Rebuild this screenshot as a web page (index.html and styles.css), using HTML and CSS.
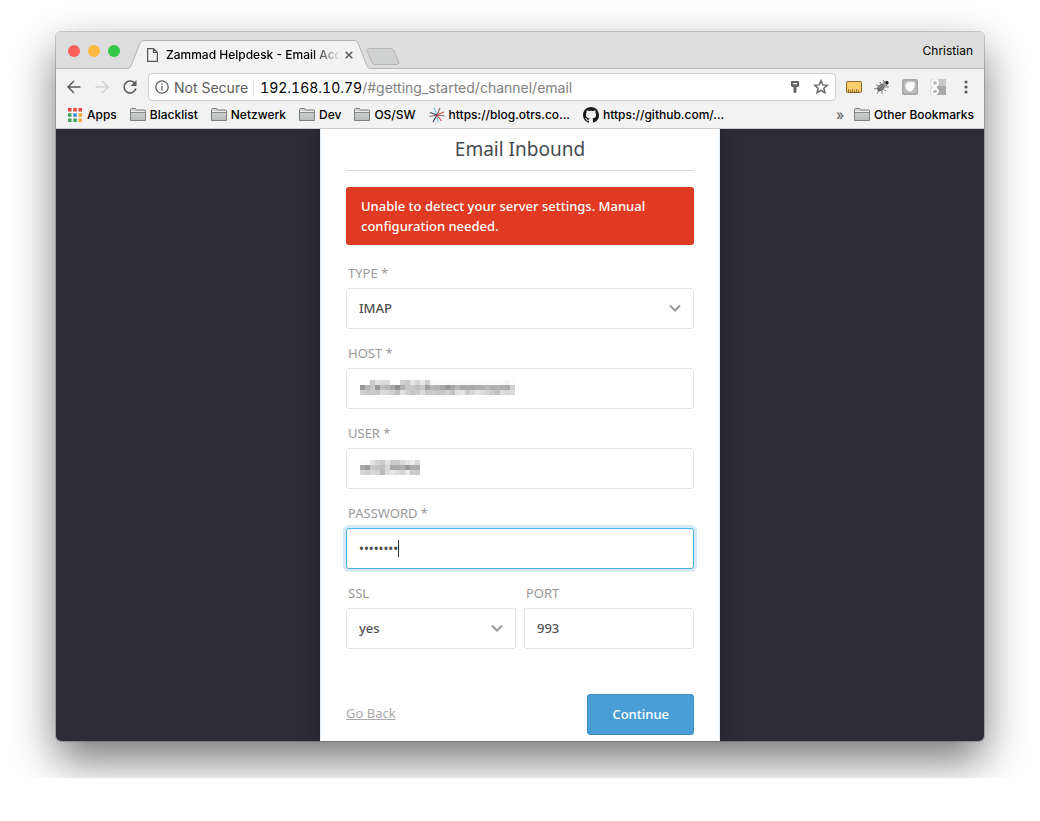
FILE: index.html
```
<!DOCTYPE html>
<html lang="en">
<head>
  <meta charset="UTF-8">
  <title>Zammad Helpdesk - Email Account</title>
  <link rel="stylesheet" href="styles.css">
</head>
<body>
  <svg class="sprite" width="0" height="0">
    <defs>
      <linearGradient id="folderFill" x1="0" y1="0" x2="0" y2="1">
        <stop offset="0" stop-color="#d6d8d8"/>
        <stop offset="1" stop-color="#b9bcbc"/>
      </linearGradient>
    </defs>
    <symbol id="folder" viewBox="0 0 16 13">
      <path d="M.5 12.5V1.500q0-1 1-1h4l1 1.500h8q1 0 1 1v9.500z" fill="url(#folderFill)" stroke="#7d7f7f"/>
      <path d="M1 4.500h14" stroke="#8b8d8d"/>
      <path d="M1 3.500h14" stroke="#eee"/>
    </symbol>
    <symbol id="chevron" viewBox="0 0 12 8">
      <path d="M1 1.500l5 5 5-5" fill="none" stroke="#999" stroke-width="2"/>
    </symbol>
  </svg>

  <div class="stage">
    <div class="window">
      <header class="tabstrip">
        <div class="lights">
          <button class="light red" aria-label="Close"></button>
          <button class="light yellow" aria-label="Minimize"></button>
          <button class="light green" aria-label="Zoom"></button>
        </div>
        <div class="tab">
          <svg class="tab-shape" viewBox="0 0 242 29">
            <path d="M0 28.500Q2 28 3 26L12 3Q13 .5 16 .5H226Q229 .5 230 3L239 26Q240 28 242 28.500V29H0z" fill="#f2f2f2"/>
            <path d="M0 28.500Q2 28 3 26L12 3Q13 .5 16 .5H226Q229 .5 230 3L239 26Q240 28 242 28.500" fill="none" stroke="#b4b4b4"/>
          </svg>
          <svg class="page-icon" width="11" height="14" viewBox="0 0 11 14" fill="none" stroke="#555" stroke-width="1.200">
            <path d="M.6.6H6.500L10.400 4.500V13.400H.6zM6.500.6V4.500H10.400"/>
          </svg>
          <span class="tab-title">Zammad Helpdesk - Email Acc</span>
          <button class="tab-close" aria-label="Close tab">
            <svg width="8" height="8" viewBox="0 0 8 8" stroke="#555" stroke-width="1.400"><path d="M.7.7l6.600 6.600M7.300.7L.7 7.300"/></svg>
          </button>
        </div>
        <button class="new-tab" aria-label="New tab">
          <svg width="34" height="17" viewBox="0 0 34 17"><path d="M3 .5H24Q27 .5 28 3L32.500 14Q33 16.500 31 16.500H9Q7 16.500 6 14L1 2.500Q.5.5 3 .5z" fill="#d0d1d1" stroke="#b4b4b4"/></svg>
        </button>
        <span class="profile">Christian</span>
      </header>

      <nav class="toolbar">
        <button aria-label="Back">
          <svg width="16" height="16" viewBox="0 0 16 16" fill="none" stroke="#5c5c5c" stroke-width="1.500"><path d="M14.500 8H2.500M8 2L2 8l6 6"/></svg>
        </button>
        <button aria-label="Forward">
          <svg width="16" height="16" viewBox="0 0 16 16" fill="none" stroke="#d2d2d2" stroke-width="1.500"><path d="M1.500 8h12M8 2l6 6-6 6"/></svg>
        </button>
        <button aria-label="Reload">
          <svg width="16" height="16" viewBox="0 0 16 16" fill="none" stroke="#5c5c5c" stroke-width="1.600"><path d="M13 4.500A6 6 0 1 0 13.900 9.500"/><path d="M14.500 1v6h-6z" fill="#5c5c5c" stroke="none"/></svg>
        </button>
        <div class="omnibox">
          <svg width="14" height="14" viewBox="0 0 14 14" fill="none" stroke="#5c5c5c" stroke-width="1.300"><circle cx="7" cy="7" r="6.200"/><path d="M7 6v4.500M7 3.300v1.500"/></svg>
          <span class="security">Not Secure</span>
          <span class="url" role="textbox" aria-label="Address"><b>192.168.10.79</b>/#getting_started/channel/email</span>
          <button aria-label="Saved password">
            <svg width="10" height="14" viewBox="0 0 10 14" fill="#666"><path d="M1.500 1h7Q9 1 9 1.500V6L8 7H6.500V12L5.500 13H4L3.500 12V7H2L1 6V1.500Q1 1 1.500 1z"/><path d="M3 3h4v1.200H3z" fill="#fff"/></svg>
          </button>
          <button aria-label="Bookmark this page">
            <svg width="16" height="16" viewBox="0 0 16 16" fill="none" stroke="#666" stroke-width="1.500"><path d="M8 1.800l1.800 4.100 4.500.4-3.400 3 1 4.300L8 11.300l-3.900 2.300 1-4.300-3.400-3 4.500-.4z"/></svg>
          </button>
        </div>
        <button aria-label="Page ruler">
          <svg width="16" height="16" viewBox="0 0 16 16"><rect x=".5" y="2.500" width="15" height="11" rx="1" fill="#f9cf6c" stroke="#8b6528"/><path d="M2.500 13V10M4.500 13v-2M6.500 13V10M8.500 13v-2M10.500 13V10M12.500 13v-2" stroke="#8b6528" stroke-width=".9"/></svg>
        </button>
        <button aria-label="Bug tracker">
          <svg width="16" height="16" viewBox="0 0 16 16"><g stroke="#777" stroke-width=".9" fill="none"><path d="M2 6l3 1M0 10l4-1M3 15l2-4M6 3l2 4M15 8l-4 0M12 12l-3-2M8 15l0-4M9 1l2 3"/></g><ellipse cx="7" cy="8.500" rx="4.600" ry="2.700" transform="rotate(-45 7 8.500)" fill="#666"/><circle cx="11.500" cy="4.500" r="2.800" fill="#999"/><circle cx="13" cy="3.500" r="1.500" fill="#111"/><path d="M5 9l3-3M6.500 10.500l3-3" stroke="#aaa"/></svg>
        </button>
        <button aria-label="Extension">
          <svg width="16" height="16" viewBox="0 0 16 16"><rect width="16" height="16" rx="2.500" fill="#a4a4a4"/><rect x="1.500" y="1.500" width="13" height="13" rx="2" fill="#bcbcbc"/><path d="M3.500 6.500Q3.500 3 7 3q6-1 5.800 2Q12.500 10 9.500 12.500 3.500 13 3.500 6.500z" fill="#fafafa"/></svg>
        </button>
        <button aria-label="Google extension">
          <svg width="16" height="16" viewBox="0 0 16 16"><path d="M0 0h9v16H0z" fill="#e2e2e2"/><path d="M8 0h8v7H8z" fill="#c8c8c8"/><path d="M7 7h9v9H7z" fill="#aaa"/><g fill="#b8b8b8" stroke="#fff" stroke-width="1.800"><ellipse cx="5" cy="4" rx="2.700" ry="2.900"/><path d="M5 7.500q-1 1.500 1 2.300 2.500 1.200 1.800 3.200Q7 15 4.500 15T2 12.500 5 10"/></g></svg>
        </button>
        <button aria-label="Menu">
          <svg width="16" height="16" viewBox="0 0 16 16" fill="#5c5c5c"><circle cx="8" cy="3" r="1.600"/><circle cx="8" cy="8" r="1.600"/><circle cx="8" cy="13" r="1.600"/></svg>
        </button>
      </nav>

      <nav class="bookmarks">
        <a href="#">
          <svg width="16" height="16" viewBox="0 0 16 16">
            <path d="M1 1h3.500v3.500H1zM6.300 1h3.500v3.500H6.300zM11.500 1H15v3.500h-3.500z" fill="#e0463b"/>
            <path d="M1 6.300h3.500v3.500H1zM1 11.500h3.500V15H1zM6.300 11.500h3.500V15H6.300z" fill="#3fa45b"/>
            <path d="M6.300 6.300h3.500v3.500H6.300z" fill="#3b8be8"/>
            <path d="M11.500 6.300H15v3.500h-3.500zM11.500 11.500H15V15h-3.500z" fill="#efab3a"/>
          </svg>
          Apps
        </a>
        <a href="#"><svg width="16" height="13"><use href="#folder"/></svg>Blacklist</a>
        <a href="#"><svg width="16" height="13"><use href="#folder"/></svg>Netzwerk</a>
        <a href="#"><svg width="16" height="13"><use href="#folder"/></svg>Dev</a>
        <a href="#"><svg width="16" height="13"><use href="#folder"/></svg>OS/SW</a>
        <a href="#">
          <svg width="16" height="16" viewBox="0 0 16 16" fill="none" stroke-width="1.200">
            <path d="M8 8L5 .8M8 8L9 15.500" stroke="#7fc0e6"/>
            <path d="M8 8L11 1M8 8L.5 9.500" stroke="#8a6a66"/>
            <path d="M8 8L4 15M8 8L1 5.500" stroke="#3d4a58"/>
            <path d="M8 8l7.500 1" stroke="#6a7380"/>
            <path d="M8 8l4.500 6M8 8L15 5" stroke="#df4a43"/>
          </svg>
          https://blog.otrs.co...
        </a>
        <a href="#">
          <svg width="16" height="16" viewBox="0 0 16 16" fill="#191717"><path d="M8 0C3.580 0 0 3.580 0 8c0 3.540 2.290 6.530 5.470 7.590.4.070.55-.17.55-.38 0-.19-.01-.82-.01-1.490-2.010.37-2.530-.49-2.690-.94-.09-.23-.48-.94-.82-1.130-.28-.15-.68-.52-.01-.53.63-.01 1.080.58 1.230.82.72 1.210 1.870.87 2.330.66.07-.52.28-.87.51-1.070-1.780-.2-3.640-.89-3.640-3.950 0-.87.31-1.590.82-2.150-.08-.2-.36-1.020.08-2.120 0 0 .67-.21 2.200.82.64-.18 1.320-.27 2-.27s1.360.09 2 .27c1.530-1.040 2.200-.82 2.200-.82.44 1.100.16 1.920.08 2.120.51.56.82 1.270.82 2.150 0 3.070-1.870 3.750-3.650 3.950.29.25.54.73.54 1.480 0 1.070-.01 1.930-.01 2.200 0 .21.15.46.55.38A8 8 0 0 0 16 8c0-4.420-3.580-8-8-8z"/></svg>
          https://github.com/...
        </a>
        <button class="more" aria-label="More bookmarks">»</button>
        <a href="#"><svg width="16" height="13"><use href="#folder"/></svg>Other Bookmarks</a>
      </nav>

      <main class="viewport">
        <form class="card">
          <h2>Email Inbound</h2>
          <div class="alert" role="alert">Unable to detect your server settings. Manual configuration needed.</div>

          <div class="form-group">
            <label for="type">TYPE *</label>
            <div class="control">
              <select id="type"><option>IMAP</option><option>POP3</option></select>
              <svg class="arrow" width="12" height="8"><use href="#chevron"/></svg>
            </div>
          </div>

          <div class="form-group">
            <label for="host">HOST *</label>
            <div class="control">
              <input id="host" type="text">
              <svg class="mosaic" id="hostMosaic"></svg>
            </div>
          </div>

          <div class="form-group">
            <label for="user">USER *</label>
            <div class="control">
              <input id="user" type="text">
              <svg class="mosaic" id="userMosaic"></svg>
            </div>
          </div>

          <div class="form-group">
            <label for="password">PASSWORD *</label>
            <div class="control">
              <input id="password" class="is-focused" type="password" value="password">
              <span class="caret"></span>
            </div>
          </div>

          <div class="form-row">
            <div class="form-group">
              <label for="ssl">SSL</label>
              <div class="control">
                <select id="ssl"><option>yes</option><option>no</option></select>
                <svg class="arrow" width="12" height="8"><use href="#chevron"/></svg>
              </div>
            </div>
            <div class="form-group">
              <label for="port">PORT</label>
              <div class="control">
                <input id="port" type="text" value="993">
              </div>
            </div>
          </div>

          <div class="form-controls">
            <a class="go-back" href="#">Go Back</a>
            <button class="btn" type="submit">Continue</button>
          </div>
        </form>
      </main>
    </div>
  </div>

  <script src="script.js"></script>
</body>
</html>
```
FILE: script.js
```
// Redacted values: one row of grey levels (hex pairs) per line of 5px cells
const mosaics = {
  hostMosaic: [
    'fefec8e2 dcdcfefe d0c8e2d6 e8d0fafc fafcfafc fafcfafc fcfafcfc faf4fc',
    '98b4c898 c0b8a890 b0c8c8c0 c8a0b8b4 a898a8b8 a8aca8b0 b0b8b0b8 b0a8d0',
    'd0c8ccc8 dcd8d0c0 e0d0c8cc dcc8ccc8 c8d0c4e0 e4ccd8e4 dcd4ccc0 dcd8dc'
  ],
  userMosaic: [
    'fcfce4d4 c8e2cccc d8e4ecd8',
    'ac9cc8c4 c0d8a8a8 b098acac',
    'd8d0d8d4 b8dce6dc d4e8ccc8'
  ]
};

for (const [id, rows] of Object.entries(mosaics)) {
  const svg = document.getElementById(id);
  rows.forEach((row, y) => {
    row.replace(/ /g, '').match(/../g).forEach((v, x) => {
      const rect = document.createElementNS('http://www.w3.org/2000/svg', 'rect');
      rect.setAttribute('x', x * 5);
      rect.setAttribute('y', y * 5);
      rect.setAttribute('width', 5);
      rect.setAttribute('height', 5);
      rect.setAttribute('fill', '#' + v + v + v);
      svg.appendChild(rect);
    });
  });
}
```
FILE: styles.css
```
:root {
  --chrome-font: Inter, "Liberation Sans", sans-serif;
  --page-font: "Noto Sans", "Open Sans", sans-serif;
  --chrome-bg: #f2f2f2;
  --dark: #2e2d37;
  --border: #e3e3e3;
  --blue: #489ed5;
}

* {
  box-sizing: border-box;
}

body {
  margin: 0;
  background: #fff;
  font-family: var(--chrome-font);
}

button {
  margin: 0;
  padding: 0;
  border: none;
  background: none;
  font-family: inherit;
  cursor: pointer;
}

svg {
  display: block;
  flex: none;
}

.sprite {
  position: absolute;
}

.stage {
  padding: 32px 56px 37px;
  overflow: hidden;
}

.window {
  border-radius: 5px;
  box-shadow: 0 0 0 1px rgba(0, 0, 0, 0.18), 0 19px 44px rgba(0, 0, 0, 0.54);
}

/* Tab strip */
.tabstrip {
  display: flex;
  align-items: flex-end;
  height: 37px;
  padding: 0 11px 0 12px;
  background: linear-gradient(#dedede, #dcdcdc);
  border-radius: 5px 5px 0 0;
  box-shadow: inset 0 -1px #b8b8b8;
}

.lights {
  display: flex;
  gap: 8px;
  margin: 0 8px 12px 0;
}

.light {
  width: 12px;
  height: 12px;
  border-radius: 50%;
}

.red { background: #fc605c; }
.yellow { background: #fdbc40; }
.green { background: #34c84a; }

.tab {
  position: relative;
  display: flex;
  align-items: center;
  width: 242px;
  height: 29px;
  padding-left: 19px;
}

.tab-shape {
  position: absolute;
  inset: 0;
}

.page-icon,
.tab-title,
.tab-close {
  position: relative;
}

.tab-title {
  width: 172px;
  margin: 0 7px 0 8px;
  white-space: nowrap;
  font-size: 12px;
  font-weight: 500;
  mask-image: linear-gradient(to right, #000 145px, transparent 176px);
}

.new-tab {
  margin: 0 0 4px -4px;
}

.profile {
  align-self: center;
  margin-left: auto;
  font-size: 12px;
}

/* Toolbar */
.toolbar {
  display: flex;
  align-items: center;
  gap: 12px;
  padding: 4px 10px 0;
  background: var(--chrome-bg);
}

.omnibox {
  display: flex;
  flex: 1;
  align-items: center;
  height: 28px;
  margin: 0 -2px;
  padding: 0 6px;
  background: #fff;
  border: 1px solid #cfcfcf;
  border-radius: 4px;
  font-size: 14px;
}

.omnibox button {
  display: flex;
  justify-content: center;
  width: 16px;
  margin-left: 10px;
}

.security {
  margin-left: 5px;
  padding-right: 5px;
  border-right: 1px solid #e6e6e6;
  color: #5c5c5c;
  white-space: nowrap;
}

.url {
  flex: 1;
  padding-left: 6px;
  color: #808080;
  white-space: nowrap;
}

.url b {
  color: #000;
  font-weight: 400;
  font-variant-numeric: tabular-nums;
}

/* Bookmarks bar */
.bookmarks {
  display: flex;
  align-items: center;
  gap: 13px;
  height: 28px;
  padding: 0 10px 0 11px;
  background: var(--chrome-bg);
  border-bottom: 1px solid #c9c9c9;
  font-size: 12px;
  font-weight: 500;
}

.bookmarks a {
  display: flex;
  align-items: center;
  gap: 4px;
  color: #000;
  text-decoration: none;
  white-space: nowrap;
}

.more {
  margin-left: auto;
  margin-right: -3px;
  color: #555;
  font-size: 14px;
}

/* Page */
.viewport {
  background: var(--dark);
  border-radius: 0 0 5px 5px;
  overflow: hidden;
}

.card {
  width: 400px;
  margin: 0 auto;
  padding: 0 25px 6px;
  background: #fff;
  border: solid #e2eef7;
  border-width: 0 1px;
  box-shadow: 0 0 20px rgba(0, 0, 0, 0.35);
  font-family: var(--page-font);
  font-size: 13px;
}

.card h2 {
  margin: 0 0 16px;
  border-bottom: 1px solid #dcdcdc;
  color: #444a4f;
  font-size: 19px;
  font-weight: 400;
  line-height: 41px;
  text-align: center;
}

.alert {
  margin-bottom: 20px;
  padding: 9px 15px;
  background: #e13a23;
  border-radius: 3px;
  color: #fff;
  font-weight: 500;
  line-height: 20px;
}

.form-group {
  flex: 1;
  margin-bottom: 16px;
}

.form-group label {
  display: block;
  margin-bottom: 7px;
  padding-left: 2px;
  color: #999;
  line-height: 16px;
}

.control {
  position: relative;
}

.control input,
.control select {
  display: block;
  width: 100%;
  height: 41px;
  padding: 0 12px 2px;
  appearance: none;
  background: #fff;
  border: 1px solid var(--border);
  border-radius: 3px;
  color: #505050;
  font-family: inherit;
  font-size: 13px;
  font-weight: 500;
  outline: none;
}

.control input:focus,
.control .is-focused {
  border-color: #4db0e2;
  box-shadow: 0 0 0 3px #d6e9f4;
}

.arrow {
  position: absolute;
  top: 16px;
  right: 13px;
  pointer-events: none;
}

.mosaic {
  position: absolute;
  top: 12px;
  left: 14px;
  width: 155px;
  height: 15px;
}

.caret {
  position: absolute;
  top: 12px;
  left: 52px;
  width: 1px;
  height: 17px;
  background: #333;
}

.form-row {
  display: flex;
  gap: 8px;
}

.form-controls {
  display: flex;
  align-items: center;
  justify-content: space-between;
  margin-top: 29px;
}

.go-back {
  padding-bottom: 4px;
  color: #aaa;
}

.btn {
  height: 41px;
  padding: 0 24px 2px;
  background: var(--blue);
  border: 1px solid #3d8fc4;
  border-radius: 3px;
  color: #fff;
  font-size: 13px;
  font-weight: 500;
}
```
